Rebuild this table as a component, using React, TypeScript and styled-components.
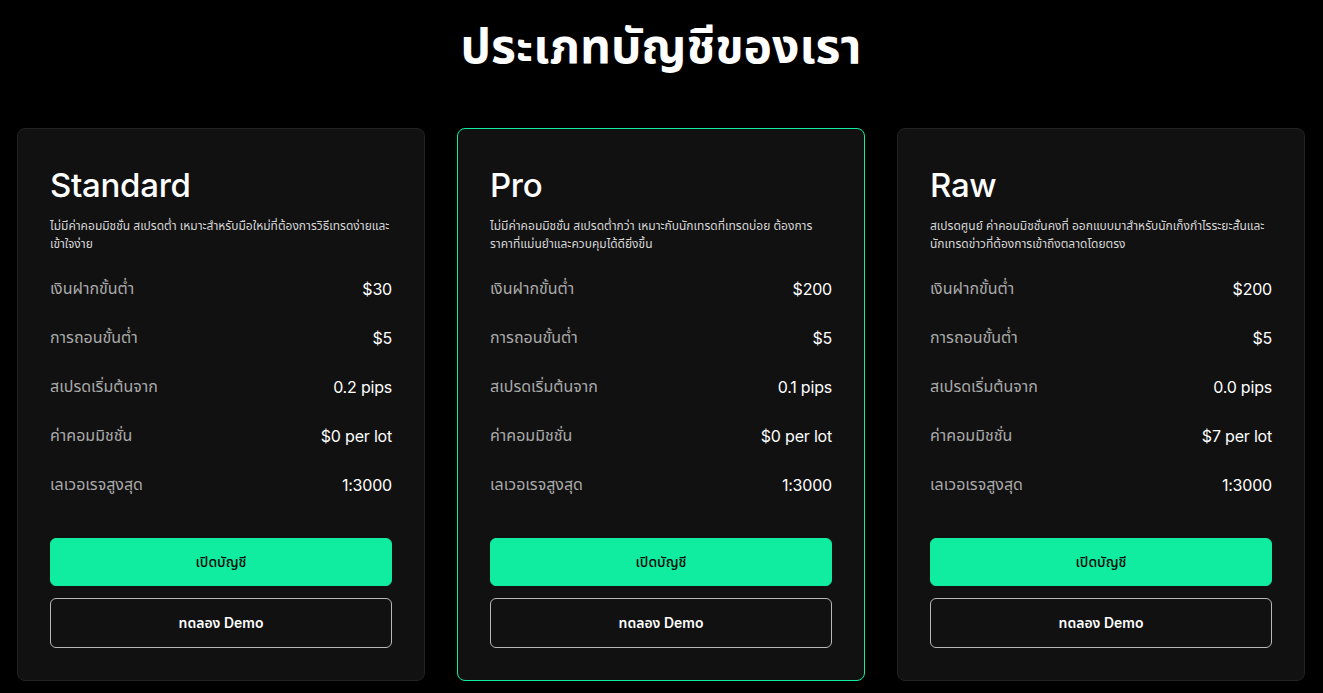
import React from 'react'
import styled, { createGlobalStyle } from 'styled-components'

const GlobalStyle = createGlobalStyle`
  html, body {
    margin: 0;
    padding: 0;
    background: #000;
  }
  body {
    font-family: Inter, "Noto Sans Thai", "Noto Sans", sans-serif;
    color: #fff;
    -webkit-font-smoothing: antialiased;
  }
`

const Page = styled.main`
  min-height: 693px;
  box-sizing: border-box;
  padding: 18px 18px 12px 17px;
  background: #000;
`

const Heading = styled.h1`
  margin: 0 0 48px;
  text-align: center;
  font-family: "Noto Sans Thai", "Noto Sans", sans-serif;
  font-size: 48px;
  font-weight: 700;
  line-height: 62px;
  color: #fff;
`

const Grid = styled.div`
  display: grid;
  grid-template-columns: repeat(3, 1fr);
  gap: 32px;
`

const Card = styled.section<{ $featured?: boolean }>`
  display: flex;
  flex-direction: column;
  background: #111111;
  border: 1px solid ${p => (p.$featured ? '#10eda0' : '#222222')};
  border-radius: 8px;
  padding: 36px 32px 32px;
`

const Name = styled.h2`
  margin: 0;
  font-family: Inter, sans-serif;
  font-size: 33px;
  font-weight: 500;
  line-height: 40px;
  letter-spacing: -0.3px;
  color: #fff;
`

const Desc = styled.p`
  margin: 12px 0 11px;
  font-family: "Noto Sans Thai", Inter, sans-serif;
  font-size: 12px;
  line-height: 18px;
  color: #d6d6d6;
`

const Specs = styled.dl`
  margin: 0 0 29px;
`

const Row = styled.div`
  display: flex;
  justify-content: space-between;
  align-items: center;
  height: 49px;
  font-size: 16px;
`

const Label = styled.dt`
  font-family: "Noto Sans Thai", Inter, sans-serif;
  color: #a9a9a9;
`

const Value = styled.dd`
  margin: 0;
  font-family: Inter, sans-serif;
  font-weight: 400;
  letter-spacing: -0.2px;
  color: #fff;
`

const Button = styled.button<{ $primary?: boolean }>`
  display: flex;
  align-items: center;
  justify-content: center;
  width: 100%;
  height: ${p => (p.$primary ? '48px' : '50px')};
  margin-top: ${p => (p.$primary ? '0' : '12px')};
  border-radius: 6px;
  border: 1px solid ${p => (p.$primary ? '#10eda0' : '#b8b8b8')};
  background: ${p => (p.$primary ? '#10eda0' : 'transparent')};
  color: ${p => (p.$primary ? '#0a0a0a' : '#fff')};
  font-family: Inter, "Noto Sans Thai", sans-serif;
  font-size: 14px;
  font-weight: ${p => (p.$primary ? 500 : 600)};
  cursor: pointer;
`

type Plan = {
  name: string
  desc: string
  featured?: boolean
  specs: [string, string][]
}

const plans: Plan[] = [
  {
    name: 'Standard',
    desc: 'ไม่มีค่าคอมมิชชั่น สเปรดต่ำ เหมาะสำหรับมือใหม่ที่ต้องการวิธีเทรดง่ายและเข้าใจง่าย',
    specs: [
      ['เงินฝากขั้นต่ำ', '$30'],
      ['การถอนขั้นต่ำ', '$5'],
      ['สเปรดเริ่มต้นจาก', '0.2 pips'],
      ['ค่าคอมมิชชั่น', '$0 per lot'],
      ['เลเวอเรจสูงสุด', '1:3000'],
    ],
  },
  {
    name: 'Pro',
    featured: true,
    desc: 'ไม่มีค่าคอมมิชชั่น สเปรดต่ำกว่า เหมาะกับนักเทรดที่เทรดบ่อย ต้องการราคาที่แม่นยำและควบคุมได้ดียิ่งขึ้น',
    specs: [
      ['เงินฝากขั้นต่ำ', '$200'],
      ['การถอนขั้นต่ำ', '$5'],
      ['สเปรดเริ่มต้นจาก', '0.1 pips'],
      ['ค่าคอมมิชชั่น', '$0 per lot'],
      ['เลเวอเรจสูงสุด', '1:3000'],
    ],
  },
  {
    name: 'Raw',
    desc: 'สเปรดศูนย์ ค่าคอมมิชชั่นคงที่ ออกแบบมาสำหรับนักเก็งกำไรระยะสั้นและนักเทรดข่าวที่ต้องการเข้าถึงตลาดโดยตรง',
    specs: [
      ['เงินฝากขั้นต่ำ', '$200'],
      ['การถอนขั้นต่ำ', '$5'],
      ['สเปรดเริ่มต้นจาก', '0.0 pips'],
      ['ค่าคอมมิชชั่น', '$7 per lot'],
      ['เลเวอเรจสูงสุด', '1:3000'],
    ],
  },
]

export default function App() {
  return (
    <>
      <GlobalStyle />
      <Page>
        <Heading>ประเภทบัญชีของเรา</Heading>
        <Grid>
          {plans.map(plan => (
            <Card key={plan.name} $featured={plan.featured}>
              <Name>{plan.name}</Name>
              <Desc>{plan.desc}</Desc>
              <Specs>
                {plan.specs.map(([label, value]) => (
                  <Row key={label}>
                    <Label>{label}</Label>
                    <Value>{value}</Value>
                  </Row>
                ))}
              </Specs>
              <Button $primary>เปิดบัญชี</Button>
              <Button>ทดลอง Demo</Button>
            </Card>
          ))}
        </Grid>
      </Page>
    </>
  )
}
